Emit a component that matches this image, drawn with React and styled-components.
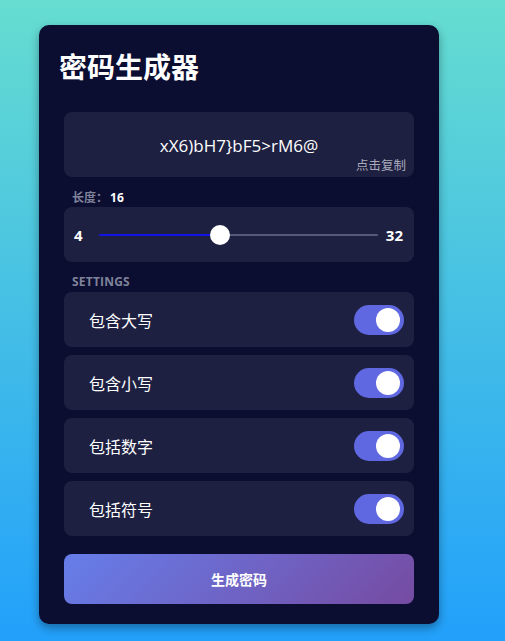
import React, { useState } from "react";
import styled, { createGlobalStyle } from "styled-components";

const Global = createGlobalStyle`
  html, body { margin: 0; padding: 0; }
  body {
    min-height: 100vh;
    background: linear-gradient(180deg, #66ddd0 0%, #22a0fb 100%);
    font-family: "Open Sans", "Noto Sans CJK SC", sans-serif;
  }
`;

const Page = styled.div`
  min-height: 100vh;
  padding: 25px 0 0 39px;
  box-sizing: border-box;
`;

const Card = styled.div`
  width: 400px;
  box-sizing: border-box;
  background: #0b0d31;
  border-radius: 10px;
  box-shadow: 0 4px 10px rgba(0, 0, 0, 0.35);
  padding: 20px 20px 20px 20px;
`;

const Title = styled.h1`
  margin: 4px 0 29px 0;
  font-family: "Noto Sans CJK SC", sans-serif;
  font-size: 28px;
  line-height: 34px;
  font-weight: 700;
  color: #ffffff;
`;

const Body = styled.div`
  padding: 0 5px;
  display: flex;
  flex-direction: column;
`;

const Panel = styled.div`
  background: #1e2041;
  border-radius: 8px;
`;

const PasswordBox = styled(Panel)`
  display: flex;
  flex-direction: column;
  padding: 22px 8px 4px;
  height: 65px;
  box-sizing: border-box;
  cursor: pointer;
`;

const PasswordText = styled.div`
  text-align: center;
  color: #ffffff;
  font-family: "Open Sans", sans-serif;
  font-size: 17px;
  line-height: 23px;
`;

const CopyHint = styled.div`
  align-self: flex-end;
  color: #a9abbd;
  font-family: "Noto Sans CJK SC", sans-serif;
  font-size: 12.5px;
  line-height: 16px;
`;

const SmallLabel = styled.div`
  margin-top: ${(p) => p.$top}px;
  padding-left: 8px;
  font-size: 12px;
  line-height: 16px;
  font-weight: 700;
  color: #7f8399;
  font-family: "Open Sans", "Noto Sans CJK SC", sans-serif;
  letter-spacing: ${(p) => (p.$caps ? "0.2px" : "0")};
`;

const LabelValue = styled.span`
  color: #ffffff;
  margin-left: 2px;
`;

const SliderBox = styled(Panel)`
  margin-top: 1px;
  height: 55px;
  display: flex;
  align-items: center;
  padding: 0 11px 0 10px;
  box-sizing: border-box;
`;

const Bound = styled.span`
  color: #ffffff;
  font-weight: 700;
  font-size: 15px;
  margin: ${(p) => (p.$end ? "0 0 0 8px" : "0 16px 0 0")};
`;

const Range = styled.input`
  flex: 1;
  margin: 0;
  height: 20px;
  -webkit-appearance: none;
  appearance: none;
  background: transparent;
  &::-webkit-slider-runnable-track {
    height: 2px;
    border-radius: 1px;
    background: var(--track);
  }
  &::-webkit-slider-thumb {
    -webkit-appearance: none;
    width: 20px;
    height: 20px;
    border-radius: 50%;
    background: #ffffff;
    margin-top: -9px;
    border: none;
  }
`;

const Rows = styled.div`
  margin-top: 2px;
  display: flex;
  flex-direction: column;
  gap: 8px;
`;

const Row = styled(Panel)`
  height: 55px;
  box-sizing: border-box;
  display: flex;
  align-items: center;
  justify-content: space-between;
  padding: 0 10px 0 25px;
`;

const RowText = styled.span`
  color: #ffffff;
  font-family: "Noto Sans CJK SC", sans-serif;
  font-size: 16px;
`;

const Toggle = styled.button`
  width: 50px;
  height: 30px;
  border: none;
  padding: 0 4px;
  border-radius: 15px;
  background: ${(p) => (p.$on ? "#5f68e1" : "#3a3d5c")};
  display: flex;
  align-items: center;
  justify-content: ${(p) => (p.$on ? "flex-end" : "flex-start")};
  cursor: pointer;
`;

const Knob = styled.span`
  width: 24px;
  height: 24px;
  border-radius: 50%;
  background: #ffffff;
`;

const GenButton = styled.button`
  margin-top: 18px;
  height: 50px;
  border: none;
  border-radius: 8px;
  background: linear-gradient(135deg, #667eea 0%, #764ba2 100%);
  color: #ffffff;
  font-family: "Noto Sans CJK SC", sans-serif;
  font-weight: 700;
  font-size: 14px;
  cursor: pointer;
`;

const OPTIONS = ["包含大写", "包含小写", "包括数字", "包括符号"];

export default function App() {
  const [len, setLen] = useState(16);
  const [opts, setOpts] = useState([true, true, true, true]);
  const pct = ((len - 4) / 28) * 100;
  return (
    <>
      <Global />
      <Page>
        <Card>
          <Title>密码生成器</Title>
          <Body>
            <PasswordBox>
              <PasswordText>xX6)bH7}bF5&gt;rM6@</PasswordText>
              <CopyHint>点击复制</CopyHint>
            </PasswordBox>
            <SmallLabel $top={13}>
              长度：<LabelValue>{len}</LabelValue>
            </SmallLabel>
            <SliderBox>
              <Bound>4</Bound>
              <Range
                type="range"
                min={4}
                max={32}
                value={len}
                onChange={(e) => setLen(Number(e.target.value))}
                style={{
                  "--track": `linear-gradient(90deg, #1414e6 ${pct}%, #565a78 ${pct}%)`,
                }}
              />
              <Bound $end>32</Bound>
            </SliderBox>
            <SmallLabel $top={12} $caps>
              SETTINGS
            </SmallLabel>
            <Rows>
              {OPTIONS.map((o, i) => (
                <Row key={o}>
                  <RowText>{o}</RowText>
                  <Toggle
                    $on={opts[i]}
                    onClick={() =>
                      setOpts(opts.map((v, j) => (j === i ? !v : v)))
                    }
                  >
                    <Knob />
                  </Toggle>
                </Row>
              ))}
            </Rows>
            <GenButton>生成密码</GenButton>
          </Body>
        </Card>
      </Page>
    </>
  );
}
